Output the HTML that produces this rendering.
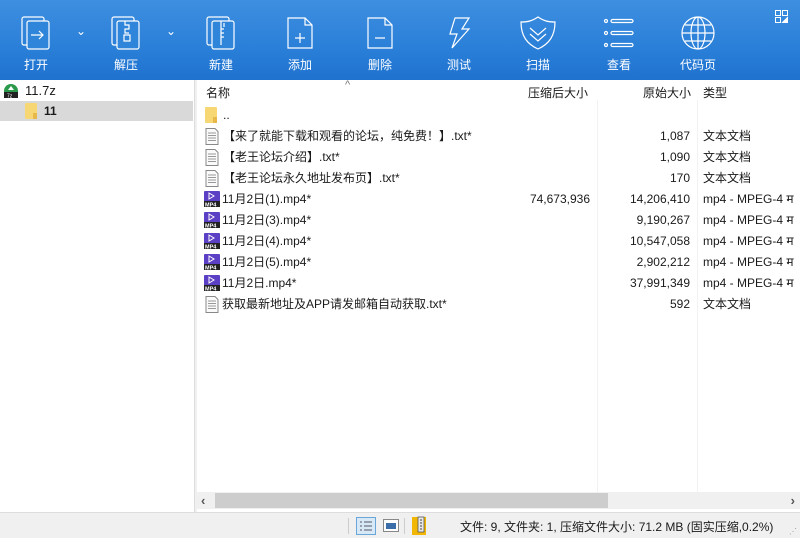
<!DOCTYPE html>
<html><head><meta charset="utf-8">
<style>
*{margin:0;padding:0;box-sizing:border-box}
body{width:800px;height:538px;overflow:hidden;background:#fff;font-family:"Liberation Sans","Noto Sans CJK SC",sans-serif;font-size:12px;color:#1a1a1a;position:relative}
#tb{position:absolute;left:0;top:0;width:800px;height:80px;background:linear-gradient(180deg,#3e8fe0 0%,#2a7fd8 60%,#1f73d0 100%)}
.btn{position:absolute;top:15px;width:60px;text-align:center;color:#fff;font-size:12px;line-height:14px}
.btn svg{display:block;margin:0 auto}
.btn span{display:block;margin-top:7px}
.chev{position:absolute;top:24px;color:#fff}
#left{position:absolute;left:0;top:80px;width:194px;height:432px;background:#fff}
#div{position:absolute;left:194px;top:80px;width:3px;height:432px;background:#f0f0f0;border-left:1px solid #ddd}
#hdr{position:absolute;left:197px;top:80px;width:603px;height:22px;line-height:22px}
.h{position:absolute;top:2px}
.row{position:absolute;left:197px;width:603px;height:21px;line-height:21px}
.row .n{position:absolute;left:26px;top:0;white-space:nowrap}
.row .c{position:absolute;right:210px;top:0;width:100px;text-align:right}
.row .o{position:absolute;right:110px;top:0;text-align:right}
.row .t{position:absolute;left:506px;top:0;white-space:nowrap}
.ic{position:absolute;left:8px;top:2px}
.vl{position:absolute;top:100px;width:1px;height:392px;background:#f2f2f2}
#sb{position:absolute;left:197px;top:492px;width:603px;height:17px;background:#f0f0f0}
#status{position:absolute;left:0;top:512px;width:800px;height:26px;background:#f0f0f0;border-top:1px solid #ddd}
</style></head><body>
<div id="tb">
 <div class="btn" style="left:6px">
  <svg width="32" height="36" viewBox="0 0 32 36" fill="none" stroke="#fff" stroke-width="1.2"><rect x="2" y="2" width="22" height="28" rx="2"/><rect x="7" y="6" width="22" height="28" rx="2" fill="#2f85da"/><path d="M11 20h12M19 16l4 4-4 4"/></svg><span>打开</span></div>
 <div class="chev" style="left:76px">⌄</div>
 <div class="btn" style="left:96px">
  <svg width="32" height="36" viewBox="0 0 32 36" fill="none" stroke="#fff" stroke-width="1.2"><rect x="2" y="2" width="22" height="28" rx="2"/><rect x="7" y="6" width="22" height="28" rx="2" fill="#2f85da"/><path d="M15 6v4h4v4h-4v4h4M14 20h6v6h-6z"/></svg><span>解压</span></div>
 <div class="chev" style="left:166px">⌄</div>
 <div class="btn" style="left:191px">
  <svg width="32" height="36" viewBox="0 0 32 36" fill="none" stroke="#fff" stroke-width="1.2"><rect x="2" y="2" width="22" height="28" rx="2"/><rect x="7" y="6" width="22" height="28" rx="2" fill="#2f85da"/><path d="M16 6v24M19 8v4M16 14h3M16 18h3M16 22h3"/></svg><span>新建</span></div>
 <div class="btn" style="left:270px">
  <svg width="32" height="36" viewBox="0 0 32 36" fill="none" stroke="#fff" stroke-width="1.2"><path d="M4 3h17l7 7v23H4z"/><path d="M21 3v7h7M11 23h10M16 18v10"/></svg><span>添加</span></div>
 <div class="btn" style="left:350px">
  <svg width="32" height="36" viewBox="0 0 32 36" fill="none" stroke="#fff" stroke-width="1.2"><path d="M4 3h17l7 7v23H4z"/><path d="M21 3v7h7M11 23h10"/></svg><span>删除</span></div>
 <div class="btn" style="left:429px">
  <svg width="32" height="36" viewBox="0 0 32 36" fill="none" stroke="#fff" stroke-width="1.2"><path d="M12 3h14l-7 11h7L9 33l5-14H7z"/></svg><span>测试</span></div>
 <div class="btn" style="left:508px">
  <svg width="40" height="36" viewBox="0 0 40 36" fill="none" stroke="#fff" stroke-width="1.2"><path d="M20 2c6 4 10 5 17 5 0 14-6 22-17 27C9 29 3 21 3 7c7 0 11-1 17-5z"/><path d="M12 13l8 7 8-7M12 19l8 7 8-7"/></svg><span>扫描</span></div>
 <div class="btn" style="left:589px">
  <svg width="36" height="36" viewBox="0 0 36 36" fill="none" stroke="#fff" stroke-width="1.2"><circle cx="5" cy="6" r="1.5"/><circle cx="5" cy="18" r="1.5"/><circle cx="5" cy="30" r="1.5"/><rect x="10" y="4.5" width="22" height="3" rx="1.5"/><rect x="10" y="16.5" width="22" height="3" rx="1.5"/><rect x="10" y="28.5" width="22" height="3" rx="1.5"/></svg><span>查看</span></div>
 <div class="btn" style="left:668px">
  <svg width="36" height="36" viewBox="0 0 36 36" fill="none" stroke="#fff" stroke-width="1.2"><circle cx="18" cy="18" r="16"/><ellipse cx="18" cy="18" rx="7" ry="16"/><path d="M18 2v32M2 18h32M5 10h26M5 26h26"/></svg><span>代码页</span></div>
 <svg style="position:absolute;left:775px;top:10px" width="13" height="13" viewBox="0 0 13 13" fill="none" stroke="#fff"><rect x="0.5" y="0.5" width="5" height="5"/><rect x="7.5" y="0.5" width="5" height="5"/><rect x="0.5" y="7.5" width="5" height="5"/><path d="M12.5 7.5v5h-5z" fill="#fff"/></svg>
</div>

<div id="left">
 <svg style="position:absolute;left:3px;top:3px" width="16" height="16" viewBox="0 0 16 16"><path d="M8 1a7 7 0 0 1 7 7v1H1V8a7 7 0 0 1 7-7z" fill="#2a9a4a"/><rect x="1" y="9" width="14" height="6" fill="#222"/><path d="M8 3l3 4H5z" fill="#fff"/><text x="4" y="14.5" font-size="5" fill="#fff">7z</text></svg>
 <div style="position:absolute;left:25px;top:3px;font-size:13px">11.7z</div>
 <div style="position:absolute;left:0;top:21px;width:193px;height:20px;background:#d9d9d9"></div>
 <svg style="position:absolute;left:25px;top:23px" width="13" height="16"><rect x="0" y="0" width="12" height="16" rx="1" fill="#f7d774"/><rect x="8" y="10" width="4" height="6" fill="#e8b94a"/></svg>
 <div style="position:absolute;left:44px;top:24px;font-weight:bold">11</div>
</div>
<div id="div"></div>

<div id="hdr">
 <div class="h" style="left:9px">名称</div>
 <div style="position:absolute;left:148px;top:-6px;color:#777;font-size:11px">^</div>
 <div class="h" style="left:331px">压缩后大小</div>
 <div class="h" style="left:446px">原始大小</div>
 <div class="h" style="left:506px">类型</div>
</div>
<div class="vl" style="left:597px"></div>
<div class="vl" style="left:697px"></div>

<div class="row" style="top:105px"><svg class="ic" width="13" height="16"><rect x="0" y="0" width="12" height="16" rx="1" fill="#f7d774"/><rect x="8" y="10" width="4" height="6" fill="#e8b94a"/></svg><div class="n">..</div></div>

<div class="row" style="top:126px"><svg class="ic" width="14" height="17" viewBox="0 0 14 17"><path d="M1 .5h9l3 3v13H1z" fill="#fafafa" stroke="#888"/><path d="M3 5h8M3 7.5h8M3 10h8M3 12.5h8" stroke="#999"/></svg><div class="n">【来了就能下载和观看的论坛，纯免费！】.txt*</div><div class="o">1,087</div><div class="t">文本文档</div></div>
<div class="row" style="top:147px"><svg class="ic" width="14" height="17" viewBox="0 0 14 17"><path d="M1 .5h9l3 3v13H1z" fill="#fafafa" stroke="#888"/><path d="M3 5h8M3 7.5h8M3 10h8M3 12.5h8" stroke="#999"/></svg><div class="n">【老王论坛介绍】.txt*</div><div class="o">1,090</div><div class="t">文本文档</div></div>
<div class="row" style="top:168px"><svg class="ic" width="14" height="17" viewBox="0 0 14 17"><path d="M1 .5h9l3 3v13H1z" fill="#fafafa" stroke="#888"/><path d="M3 5h8M3 7.5h8M3 10h8M3 12.5h8" stroke="#999"/></svg><div class="n">【老王论坛永久地址发布页】.txt*</div><div class="o">170</div><div class="t">文本文档</div></div>

<div class="row" style="top:189px"><svg class="ic" style="left:7px" width="16" height="16"><rect width="16" height="16" rx="1" fill="#5b3fc4"/><path d="M5 2l5 3-5 3z" fill="none" stroke="#fff"/><rect y="10" width="16" height="6" fill="#222"/><text x="1" y="15.5" font-size="5.5" fill="#fff" font-weight="bold">MP4</text></svg><div class="n" style="left:25px">11月2日(1).mp4*</div><div class="c">74,673,936</div><div class="o">14,206,410</div><div class="t">mp4 - MPEG-4 म</div></div>
<div class="row" style="top:210px"><svg class="ic" style="left:7px" width="16" height="16"><rect width="16" height="16" rx="1" fill="#5b3fc4"/><path d="M5 2l5 3-5 3z" fill="none" stroke="#fff"/><rect y="10" width="16" height="6" fill="#222"/><text x="1" y="15.5" font-size="5.5" fill="#fff" font-weight="bold">MP4</text></svg><div class="n" style="left:25px">11月2日(3).mp4*</div><div class="o">9,190,267</div><div class="t">mp4 - MPEG-4 म</div></div>
<div class="row" style="top:231px"><svg class="ic" style="left:7px" width="16" height="16"><rect width="16" height="16" rx="1" fill="#5b3fc4"/><path d="M5 2l5 3-5 3z" fill="none" stroke="#fff"/><rect y="10" width="16" height="6" fill="#222"/><text x="1" y="15.5" font-size="5.5" fill="#fff" font-weight="bold">MP4</text></svg><div class="n" style="left:25px">11月2日(4).mp4*</div><div class="o">10,547,058</div><div class="t">mp4 - MPEG-4 म</div></div>
<div class="row" style="top:252px"><svg class="ic" style="left:7px" width="16" height="16"><rect width="16" height="16" rx="1" fill="#5b3fc4"/><path d="M5 2l5 3-5 3z" fill="none" stroke="#fff"/><rect y="10" width="16" height="6" fill="#222"/><text x="1" y="15.5" font-size="5.5" fill="#fff" font-weight="bold">MP4</text></svg><div class="n" style="left:25px">11月2日(5).mp4*</div><div class="o">2,902,212</div><div class="t">mp4 - MPEG-4 म</div></div>
<div class="row" style="top:273px"><svg class="ic" style="left:7px" width="16" height="16"><rect width="16" height="16" rx="1" fill="#5b3fc4"/><path d="M5 2l5 3-5 3z" fill="none" stroke="#fff"/><rect y="10" width="16" height="6" fill="#222"/><text x="1" y="15.5" font-size="5.5" fill="#fff" font-weight="bold">MP4</text></svg><div class="n" style="left:25px">11月2日.mp4*</div><div class="o">37,991,349</div><div class="t">mp4 - MPEG-4 म</div></div>
<div class="row" style="top:294px"><svg class="ic" width="14" height="17" viewBox="0 0 14 17"><path d="M1 .5h9l3 3v13H1z" fill="#fafafa" stroke="#888"/><path d="M3 5h8M3 7.5h8M3 10h8M3 12.5h8" stroke="#999"/></svg><div class="n" style="left:25px">获取最新地址及APP请发邮箱自动获取.txt*</div><div class="o">592</div><div class="t">文本文档</div></div>

<div id="sb">
 <div style="position:absolute;left:4px;top:1px;color:#555;font-size:13px;font-weight:bold">&lsaquo;</div>
 <div style="position:absolute;left:18px;top:1px;width:393px;height:15px;background:#cdcdcd"></div>
 <div style="position:absolute;right:5px;top:1px;color:#555;font-size:13px;font-weight:bold">&rsaquo;</div>
</div>

<div id="status">
 <div style="position:absolute;left:348px;top:5px;width:1px;height:16px;background:#ccc"></div>
 <svg style="position:absolute;left:356px;top:4px" width="20" height="18"><rect x=".5" y=".5" width="19" height="17" fill="#d7e9f7" stroke="#6aa7d8"/><path d="M4 5h2M4 9h2M4 13h2M8 5h8M8 9h8M8 13h8" stroke="#556"/></svg>
 <svg style="position:absolute;left:383px;top:6px" width="16" height="13"><rect x=".5" y=".5" width="15" height="12" fill="#fff" stroke="#888"/><rect x="3" y="4" width="10" height="6" fill="#3b6ea8"/></svg>
 <div style="position:absolute;left:404px;top:5px;width:1px;height:16px;background:#ccc"></div>
 <svg style="position:absolute;left:412px;top:3px" width="16" height="20"><rect x="0" y="1" width="14" height="18" fill="#f2b705"/><rect x="6" y="1" width="6" height="15" fill="#e8e8e8" stroke="#555" stroke-width=".8"/><path d="M8 4h2M8 7h2M8 10h2M8 13h2" stroke="#444"/></svg>
 <div style="position:absolute;left:460px;top:5px;font-size:12px">文件: 9, 文件夹: 1, 压缩文件大小: 71.2 MB (固实压缩,0.2%)</div>
 <div style="position:absolute;right:3px;bottom:2px;color:#999;font-size:8px">⋰</div>
</div>
</body></html>
